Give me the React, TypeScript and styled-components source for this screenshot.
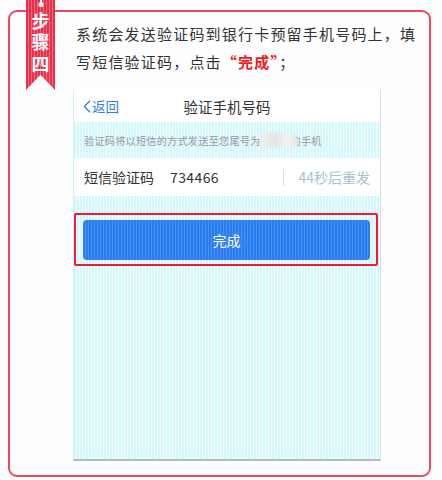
import styled, { createGlobalStyle } from "styled-components";

const GlobalStyle = createGlobalStyle`
  html, body {
    margin: 0;
    padding: 0;
    background: #fdfdfd;
  }
  body {
    font-family: "Noto Sans CJK SC", "Noto Sans", "Liberation Sans", sans-serif;
  }
`;

const cyanStripes = `repeating-linear-gradient(90deg, #d3f7fc 0 2px, #f2fdfe 2px 3px)`;

const App = () => {
  return (
    <>
      <GlobalStyle />
      <Page>
        <StepCard>
          <Ribbon>
            <Pin width="8" height="8" viewBox="0 0 8 8">
              <rect x="3" y="0" width="2" height="3" fill="#fff" />
              <circle cx="4" cy="4.5" r="2.6" fill="#fff" />
            </Pin>
            <RibbonText>步骤四</RibbonText>
          </Ribbon>

          <Instruction>
            <Line>系统会发送验证码到银行卡预留手机号码上，填</Line>
            <Line>
              写短信验证码，点击<Highlight>“完成”</Highlight>；
            </Line>
          </Instruction>

          <Phone>
            <NavBar>
              <BackLink>
                <svg width="8" height="13" viewBox="0 0 8 13">
                  <path d="M7 0.8 L1.4 6.5 L7 12.2" fill="none" stroke="#2f7fe8" strokeWidth="1.3" />
                </svg>
                返回
              </BackLink>
              <NavTitle>验证手机号码</NavTitle>
            </NavBar>

            <Notice>
              验证码将以短信的方式发送至您尾号为<Blur />的手机
            </Notice>

            <CodeRow>
              <FieldLabel>短信验证码</FieldLabel>
              <FieldValue>734466</FieldValue>
              <Divider />
              <Resend>44秒后重发</Resend>
            </CodeRow>

            <Highlighted>
              <DoneButton>完成</DoneButton>
            </Highlighted>
          </Phone>
        </StepCard>
      </Page>
    </>
  );
};

const Page = styled.div`
  width: 442px;
  height: 480px;
  padding: 10px 11px 0 8px;
  box-sizing: border-box;
`;

const StepCard = styled.div`
  position: relative;
  height: 467px;
  box-sizing: border-box;
  border: 2px solid #f2465e;
  border-radius: 9px;
  background: #fefefe;
  padding: 8px 0 0 0;
  display: flex;
  flex-direction: column;
`;

const Ribbon = styled.div`
  position: absolute;
  left: 16px;
  top: -12px;
  width: 29px;
  height: 90px;
  background: repeating-linear-gradient(90deg, #e6334d 0 2px, #f0697b 2px 3px);
  clip-path: polygon(0 0, 100% 0, 100% 100%, 50% 83%, 0 100%);
  display: flex;
  flex-direction: column;
  align-items: center;
`;

const Pin = styled.svg`
  display: block;
`;

const RibbonText = styled.div`
  writing-mode: vertical-rl;
  color: #fff;
  font-weight: bold;
  font-size: 18px;
  letter-spacing: 3.5px;
  line-height: 1;
  margin-top: 4px;
`;

const Instruction = styled.div`
  padding: 0 8px 0 66px;
  font-size: 15px;
  line-height: 28px;
  letter-spacing: 1.2px;
  color: #333;
`;

const Line = styled.div`
  white-space: nowrap;
`;

const Highlight = styled.span`
  color: #f01c22;
  font-weight: bold;
`;

const Phone = styled.div`
  margin: 14px 0 0 63px;
  width: 308px;
  height: 371px;
  box-sizing: border-box;
  background: ${cyanStripes};
  border-left: 1px solid #c8f4f8;
  border-right: 1px solid #d8dede;
  border-bottom: 2px solid #b4bcbc;
  display: flex;
  flex-direction: column;
`;

const NavBar = styled.div`
  height: 32px;
  background: #fff;
  display: flex;
  align-items: center;
  justify-content: center;
  position: relative;
`;

const BackLink = styled.div`
  position: absolute;
  left: 9px;
  top: 0;
  height: 100%;
  display: flex;
  align-items: center;
  gap: 1px;
  color: #2f7fe8;
  font-size: 13.5px;
`;

const NavTitle = styled.div`
  font-size: 14.5px;
  color: #333;
`;

const Notice = styled.div`
  height: 36px;
  display: flex;
  align-items: center;
  padding-left: 10px;
  font-size: 10.2px;
  letter-spacing: 0.2px;
  color: #9a9a9a;
`;

const Blur = styled.span`
  display: inline-block;
  width: 36px;
  height: 14px;
  margin-right: -6px;
  background: linear-gradient(90deg, #f0f0f0, #e4e4e4 40%, #f3f3f3 70%, #e8e8e8);
  filter: blur(1px);
`;

const CodeRow = styled.div`
  height: 38px;
  background: #fff;
  display: flex;
  align-items: center;
  padding: 0 10px;
`;

const FieldLabel = styled.div`
  font-size: 14px;
  color: #333;
  width: 86px;
`;

const FieldValue = styled.div`
  flex: 1;
  font-size: 14px;
  letter-spacing: 0.4px;
  color: #333;
`;

const Divider = styled.div`
  width: 1px;
  height: 17px;
  background: #bfe9ee;
  margin-right: 14px;
`;

const Resend = styled.div`
  font-size: 14px;
  color: #a9c3ca;
`;

const Highlighted = styled.div`
  margin: 17px 2px 0 0;
  border: 2px solid #f21a36;
  border-radius: 2px;
  padding: 5px 6px 4px 7px;
`;

const DoneButton = styled.div`
  height: 40px;
  border-radius: 4px;
  background: repeating-linear-gradient(90deg, #2b7ced 0 2px, #4590f6 2px 3px);
  color: #fff;
  font-size: 14px;
  display: flex;
  align-items: center;
  justify-content: center;
`;

export default App;
